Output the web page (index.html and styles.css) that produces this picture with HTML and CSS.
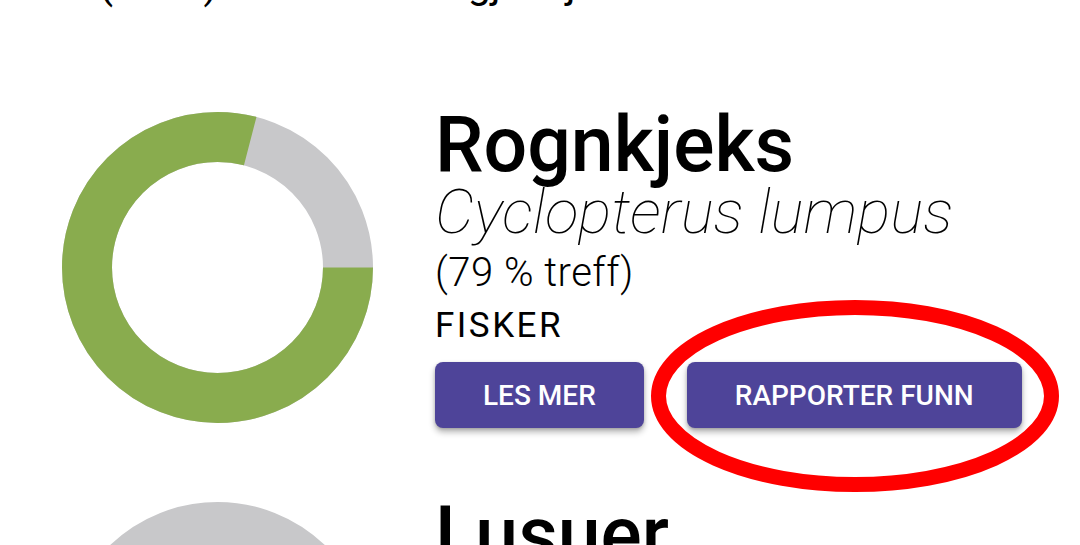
FILE: index.html
```html
<!DOCTYPE html>
<html lang="no">
<head>
<meta charset="utf-8">
<title>Resultater</title>
<link rel="stylesheet" href="styles.css">
</head>
<body>
<div class="page">
  <p class="intro">(Bilde) Alle arter ble gjenkjent</p>
  <ul class="results">
    <li class="result">
      <svg class="donut" width="311" height="311" viewBox="0 0 311 311" aria-hidden="true">
        <circle cx="155.5" cy="155.5" r="130.5" fill="none" stroke="#c8c8ca" stroke-width="50"/>
        <circle cx="155.5" cy="155.5" r="130.5" fill="none" stroke="#89ac4e" stroke-width="50" stroke-dasharray="647.8 820"/>
      </svg>
      <div class="info">
        <h2 class="name">Rognkjeks</h2>
        <p class="latin">Cyclopterus lumpus</p>
        <p class="match">(79 % treff)</p>
        <p class="group">FISKER</p>
        <div class="actions">
          <button class="btn">LES MER</button>
          <span class="highlight">
            <button class="btn">RAPPORTER FUNN</button>
            <svg class="ring" width="408" height="192" viewBox="0 0 408 192" aria-hidden="true">
              <ellipse cx="204" cy="96" rx="196.5" ry="88.5" fill="none" stroke="#ff0000" stroke-width="15"/>
            </svg>
          </span>
        </div>
      </div>
    </li>
    <li class="result">
      <svg class="donut" width="311" height="311" viewBox="0 0 311 311" aria-hidden="true">
        <circle cx="155.5" cy="155.5" r="130.5" fill="none" stroke="#c8c8ca" stroke-width="50"/>
      </svg>
      <div class="info">
        <h2 class="name">Lusuer</h2>
        <p class="latin">Sebastes</p>
        <p class="match">(12 % treff)</p>
        <p class="group">FISKER</p>
      </div>
    </li>
  </ul>
</div>
</body>
</html>
```
FILE: styles.css
```css
html, body {
  margin: 0;
  padding: 0;
  overflow: hidden;
  background: #ffffff;
}

body {
  font-family: Roboto, "Noto Sans", "Liberation Sans", sans-serif;
  color: #000000;
}

.page {
  width: 1080px;
  height: 545px;
  overflow: hidden;
}

.intro {
  margin: -40px 0 0 99px;
  font-size: 41px;
  line-height: 48px;
  font-weight: 400;
  white-space: nowrap;
}

.results {
  list-style: none;
  margin: 97px 0 0 0;
  padding: 0;
  display: flex;
  flex-direction: column;
  gap: 67px;
}

.result {
  display: flex;
  align-items: flex-start;
  gap: 62px;
  padding-left: 62px;
}

.donut {
  flex: none;
  margin-top: 7px;
  display: block;
}

.info {
  display: flex;
  flex-direction: column;
  align-items: flex-start;
}

.name {
  margin: 0;
  font-size: 77px;
  line-height: 80px;
  font-weight: 500;
  white-space: nowrap;
}

.latin {
  margin: 0;
  font-size: 62px;
  line-height: 53px;
  font-weight: 100;
  font-style: italic;
  white-space: nowrap;
}

.match {
  margin: 13px 0 0 0;
  font-size: 40px;
  line-height: 44px;
  font-weight: 300;
  letter-spacing: 0.5px;
}

.group {
  margin: 11px 0 0 0;
  font-size: 35px;
  line-height: 40px;
  font-weight: 400;
  letter-spacing: 2.5px;
}

.actions {
  display: flex;
  gap: 43px;
  margin-top: 16px;
}

.btn {
  height: 66px;
  padding: 0 48px;
  border: none;
  border-radius: 8px;
  background: #4e4499;
  color: #ffffff;
  font-family: Roboto, "Noto Sans", sans-serif;
  font-size: 28px;
  font-weight: 500;
  letter-spacing: 0;
  box-shadow: 0 4px 6px rgba(0, 0, 0, 0.3), 0 1px 3px rgba(0, 0, 0, 0.15);
  display: block;
}

.highlight {
  position: relative;
  display: block;
}

.ring {
  position: absolute;
  left: -36px;
  top: -62px;
  pointer-events: none;
}
```
